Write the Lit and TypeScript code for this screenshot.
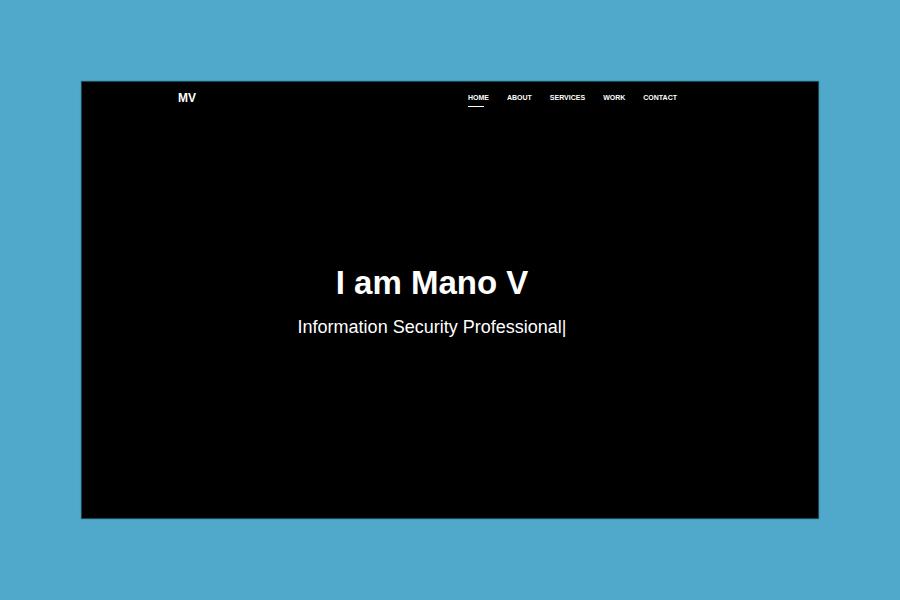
import { LitElement, html, css } from "lit";
import { customElement, state } from "lit/decorators.js";
import { classMap } from "lit/directives/class-map.js";

const LINKS = ["Home", "About", "Services", "Work", "Contact"];

@customElement("app-root")
export class AppRoot extends LitElement {
  static styles = css`
    :host {
      display: flex;
      box-sizing: border-box;
      min-height: 100vh;
      padding: 81px;
      background: #50a9cb;
      color: #fff;
      font-family: "Liberation Sans", Arial, sans-serif;
    }
    .page {
      flex: 1;
      display: flex;
      flex-direction: column;
      border: 1px solid #1d4656;
      background: #000;
      box-shadow: 0 0 2px #3c87a4;
    }
    .bar {
      display: flex;
      justify-content: space-between;
      align-items: center;
      height: 31px;
      padding: 0 141px 0 96px;
    }
    a {
      color: inherit;
      text-decoration: none;
      font-weight: 700;
    }
    .brand {
      font-size: 12px;
      line-height: 16px;
    }
    .links {
      display: flex;
      gap: 18px;
      margin: 0;
      padding: 0;
      list-style: none;
      font-size: 7px;
      line-height: 16px;
      text-transform: uppercase;
    }
    .link {
      display: block;
      position: relative;
    }
    .active::after {
      content: "";
      position: absolute;
      left: 0;
      bottom: -1px;
      width: 16px;
      height: 1px;
      background: #fff;
    }
    .hero {
      flex: 1;
      display: flex;
      flex-direction: column;
      align-items: center;
      justify-content: center;
      gap: 12px;
      padding: 0 132px 30px 96px;
    }
    h1,
    p {
      margin: 0;
      text-align: center;
    }
    h1 {
      font-size: 33px;
      line-height: 40px;
    }
    p {
      font-size: 18px;
      line-height: 24px;
    }
  `;

  @state() private active = "Home";

  render() {
    return html`
      <main class="page">
        <header class="bar">
          <a class="brand" href="#home">MV</a>
          <nav>
            <ul class="links">
              ${LINKS.map(
                (name) => html`<li>
                  <a
                    class=${classMap({ link: true, active: name === this.active })}
                    href="#${name.toLowerCase()}"
                    @click=${() => (this.active = name)}
                    >${name}</a
                  >
                </li>`
              )}
            </ul>
          </nav>
        </header>
        <section class="hero">
          <h1>I am Mano V</h1>
          <p>Information Security Professional<span>|</span></p>
        </section>
      </main>
    `;
  }
}
